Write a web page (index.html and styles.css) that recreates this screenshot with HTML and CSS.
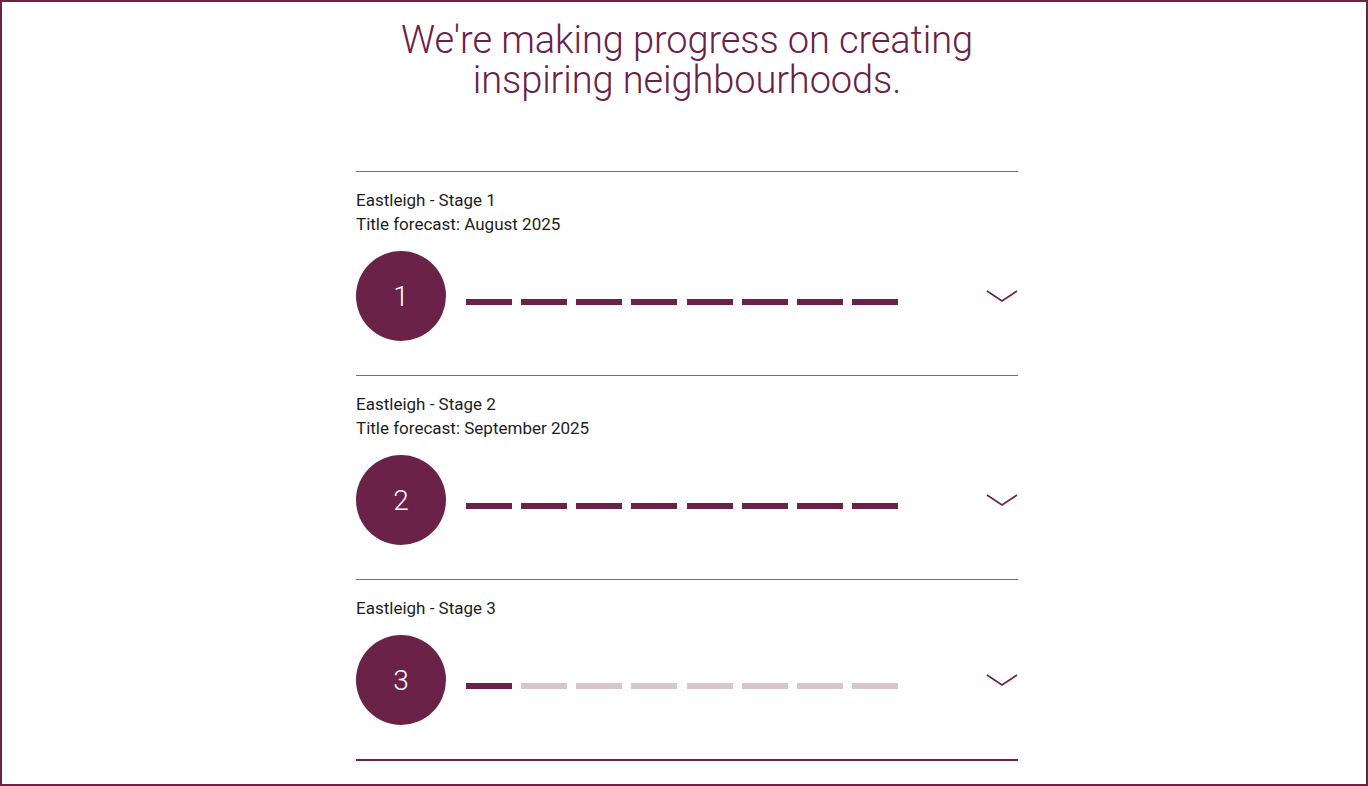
FILE: index.html
```html
<!DOCTYPE html>
<html lang="en">
<head>
<meta charset="utf-8">
<title>Progress</title>
<link rel="stylesheet" href="styles.css">
</head>
<body>
<main class="page">
  <h1 class="title">We're making progress on creating<br>inspiring neighbourhoods.</h1>
  <div class="stages">
    <section class="stage">
      <p class="stage-text">Eastleigh - Stage 1<br>Title forecast: August 2025</p>
      <div class="stage-row">
        <div class="badge">1</div>
        <div class="dashes">
          <span class="dash on"></span><span class="dash on"></span><span class="dash on"></span><span class="dash on"></span><span class="dash on"></span><span class="dash on"></span><span class="dash on"></span><span class="dash on"></span>
        </div>
        <svg class="chev" width="32" height="16" viewBox="0 0 32 16"><path d="M1 2 L16 12 L31 2" fill="none" stroke="#6a2248" stroke-width="1.6"/></svg>
      </div>
    </section>
    <section class="stage">
      <p class="stage-text">Eastleigh - Stage 2<br>Title forecast: September 2025</p>
      <div class="stage-row">
        <div class="badge">2</div>
        <div class="dashes">
          <span class="dash on"></span><span class="dash on"></span><span class="dash on"></span><span class="dash on"></span><span class="dash on"></span><span class="dash on"></span><span class="dash on"></span><span class="dash on"></span>
        </div>
        <svg class="chev" width="32" height="16" viewBox="0 0 32 16"><path d="M1 2 L16 12 L31 2" fill="none" stroke="#6a2248" stroke-width="1.6"/></svg>
      </div>
    </section>
    <section class="stage last">
      <p class="stage-text">Eastleigh - Stage 3</p>
      <div class="stage-row">
        <div class="badge">3</div>
        <div class="dashes">
          <span class="dash on"></span><span class="dash"></span><span class="dash"></span><span class="dash"></span><span class="dash"></span><span class="dash"></span><span class="dash"></span><span class="dash"></span>
        </div>
        <svg class="chev" width="32" height="16" viewBox="0 0 32 16"><path d="M1 2 L16 12 L31 2" fill="none" stroke="#6a2248" stroke-width="1.6"/></svg>
      </div>
    </section>
  </div>
</main>
</body>
</html>
```
FILE: styles.css
```css
* { box-sizing: border-box; }
html, body { margin: 0; padding: 0; }
body {
  width: 1368px;
  height: 786px;
  border: 2px solid #6a2248;
  background: #fff;
  font-family: Roboto, "Liberation Sans", sans-serif;
  overflow: hidden;
}
.page {
  display: flex;
  flex-direction: column;
  align-items: center;
  padding-left: 6px;
}
.title {
  margin: 18px 0 0;
  font-weight: 300;
  font-size: 38px;
  line-height: 40px;
  letter-spacing: -0.1px;
  color: #6a2248;
  text-align: center;
}
.stages {
  width: 662px;
  margin-top: 71px;
  border-top: 1px solid #7a6a72;
}
.stage {
  padding: 16px 0 34px;
  border-bottom: 1px solid #7a6a72;
}
.stage.last {
  padding-bottom: 34px;
  border-bottom: 2px solid #6a2248;
}
.stage-text {
  margin: 0;
  font-size: 17px;
  line-height: 24px;
  color: #1d1d1d;
}
.stage-row {
  display: flex;
  align-items: center;
  margin-top: 15px;
}
.badge {
  width: 90px;
  height: 90px;
  border-radius: 50%;
  background: #6a2248;
  color: #fff;
  font-size: 28px;
  font-weight: 300;
  display: flex;
  align-items: center;
  justify-content: center;
}
.dashes {
  display: flex;
  justify-content: space-between;
  width: 432px;
  margin-left: 20px;
  margin-top: 12px;
}
.dash {
  width: 46px;
  height: 6px;
  background: #d9c4cf;
}
.dash.on { background: #6a2248; }
.chev {
  margin-left: auto;
  margin-top: 2px;
}
```
